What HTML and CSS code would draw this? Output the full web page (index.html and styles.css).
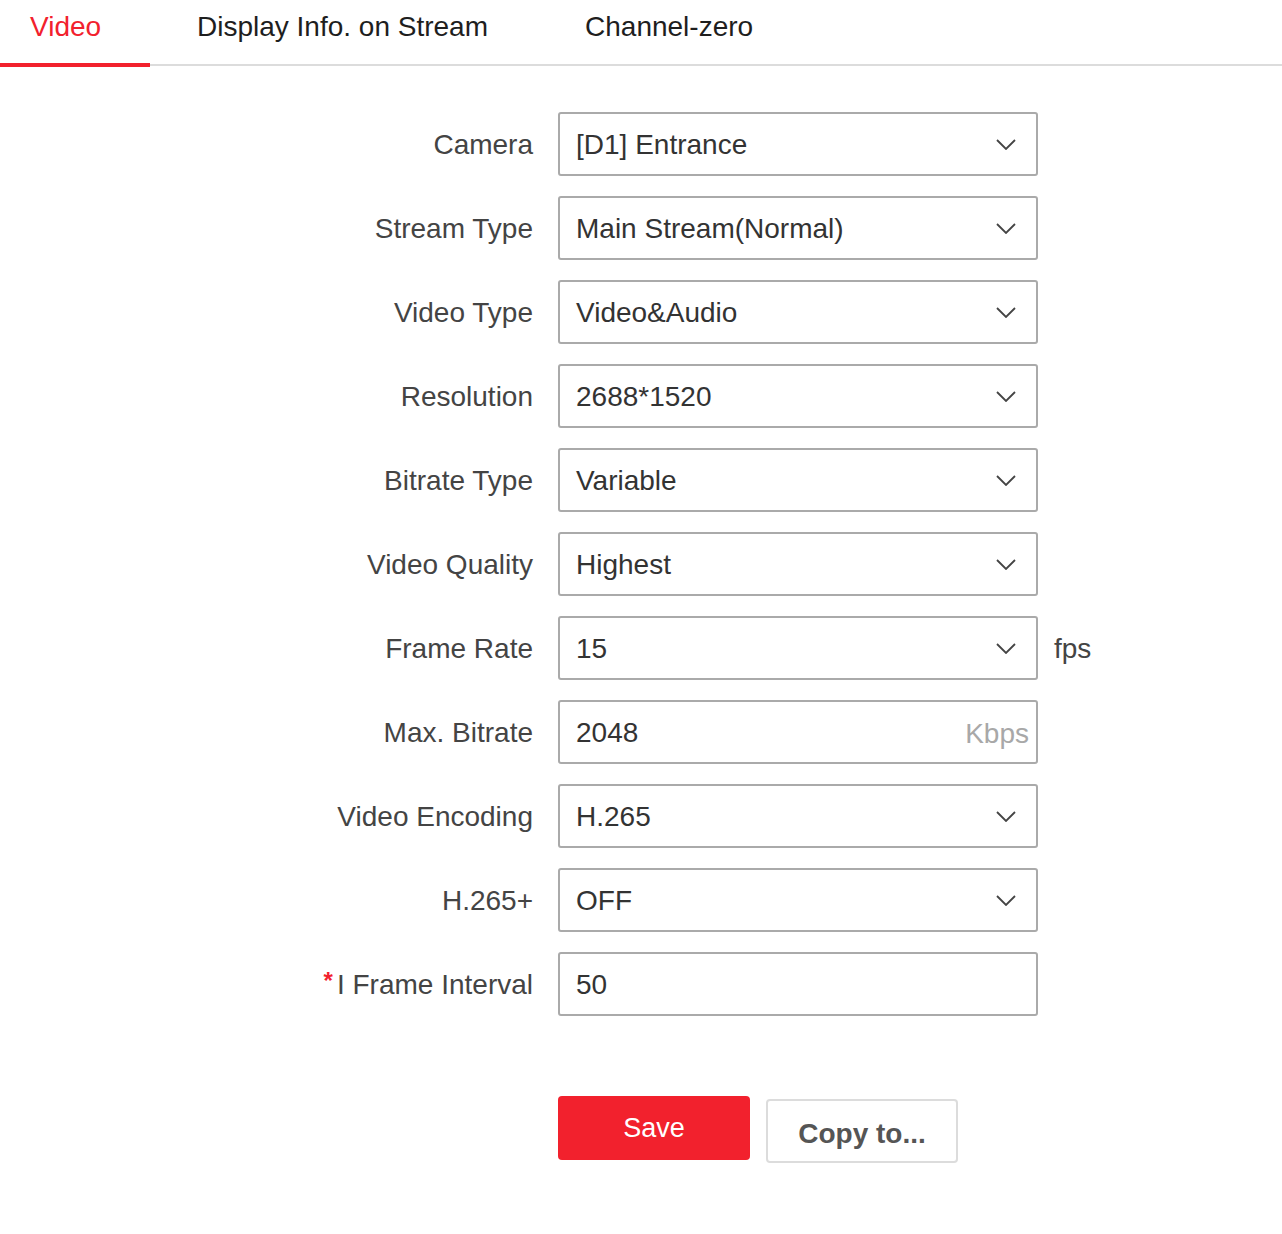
FILE: index.html
```html
<!DOCTYPE html>
<html>
<head>
<meta charset="utf-8">
<link rel="stylesheet" href="styles.css">
</head>
<body>
<div class="tabs">
  <div class="tab active">Video</div>
  <div class="tab t2">Display Info. on Stream</div>
  <div class="tab t3">Channel-zero</div>
</div>
<div class="form">
  <div class="label">Camera</div>
  <div class="field select"><span>[D1] Entrance</span><svg class="chev" viewBox="0 0 20 11" width="20" height="11"><polyline points="1,1 10,10 19,1"/></svg></div>
  <div></div>

  <div class="label">Stream Type</div>
  <div class="field select"><span>Main Stream(Normal)</span><svg class="chev" viewBox="0 0 20 11" width="20" height="11"><polyline points="1,1 10,10 19,1"/></svg></div>
  <div></div>

  <div class="label">Video Type</div>
  <div class="field select"><span>Video&amp;Audio</span><svg class="chev" viewBox="0 0 20 11" width="20" height="11"><polyline points="1,1 10,10 19,1"/></svg></div>
  <div></div>

  <div class="label">Resolution</div>
  <div class="field select"><span>2688*1520</span><svg class="chev" viewBox="0 0 20 11" width="20" height="11"><polyline points="1,1 10,10 19,1"/></svg></div>
  <div></div>

  <div class="label">Bitrate Type</div>
  <div class="field select"><span>Variable</span><svg class="chev" viewBox="0 0 20 11" width="20" height="11"><polyline points="1,1 10,10 19,1"/></svg></div>
  <div></div>

  <div class="label">Video Quality</div>
  <div class="field select"><span>Highest</span><svg class="chev" viewBox="0 0 20 11" width="20" height="11"><polyline points="1,1 10,10 19,1"/></svg></div>
  <div></div>

  <div class="label">Frame Rate</div>
  <div class="field select"><span>15</span><svg class="chev" viewBox="0 0 20 11" width="20" height="11"><polyline points="1,1 10,10 19,1"/></svg></div>
  <div class="unit">fps</div>

  <div class="label">Max. Bitrate</div>
  <div class="field input"><span>2048</span><span class="suffix">Kbps</span></div>
  <div></div>

  <div class="label">Video Encoding</div>
  <div class="field select"><span>H.265</span><svg class="chev" viewBox="0 0 20 11" width="20" height="11"><polyline points="1,1 10,10 19,1"/></svg></div>
  <div></div>

  <div class="label">H.265+</div>
  <div class="field select"><span>OFF</span><svg class="chev" viewBox="0 0 20 11" width="20" height="11"><polyline points="1,1 10,10 19,1"/></svg></div>
  <div></div>

  <div class="label"><span class="req">*</span>I Frame Interval</div>
  <div class="field input"><span>50</span></div>
  <div></div>
</div>
<div class="actions">
  <button class="btn save">Save</button>
  <button class="btn copy">Copy to...</button>
</div>
</body>
</html>
```

FILE: styles.css
```css
html, body {
  margin: 0;
  padding: 0;
  background: #fff;
  font-family: "Liberation Sans", Arial, sans-serif;
}
.tabs {
  display: flex;
  height: 64px;
  border-bottom: 2px solid #dcdcdc;
}
.tab {
  position: relative;
  font-size: 28px;
  line-height: 54px;
  color: #1e1e1e;
  white-space: nowrap;
}
.tab.active {
  width: 150px;
  box-sizing: border-box;
  padding-left: 30px;
  color: #f2212d;
}
.tab.active::after {
  content: "";
  position: absolute;
  left: 0;
  right: 0;
  bottom: -3px;
  height: 4px;
  background: #f2212d;
}
.tab.t2 { margin-left: 47px; }
.tab.t3 { margin-left: 97px; }

.form {
  display: grid;
  grid-template-columns: 533px 480px auto;
  column-gap: 25px;
  row-gap: 20px;
  margin-top: 46px;
  align-items: center;
}
.label {
  text-align: right;
  font-size: 28px;
  color: #444;
  white-space: nowrap;
  padding-top: 2px;
}
.req {
  color: #f2212d;
  font-size: 24px;
  font-weight: bold;
  position: relative;
  top: -5px;
  margin-right: 4px;
}
.field {
  height: 64px;
  box-sizing: border-box;
  border: 2px solid #aaaaaa;
  border-radius: 3px;
  display: flex;
  align-items: center;
  justify-content: space-between;
  padding: 2px 20px 0 16px;
  font-size: 28px;
  color: #333;
}
.field.input {
  padding-right: 7px;
}
.chev {
  fill: none;
  stroke: #444;
  stroke-width: 1.8;
  flex: none;
  margin-top: -2px;
}
.suffix {
  color: #a8a8a8;
  margin-top: 2px;
}
.unit {
  font-size: 28px;
  color: #444;
  margin-left: -9px;
  padding-top: 2px;
}
.actions {
  display: flex;
  align-items: flex-start;
  gap: 16px;
  margin-left: 558px;
  margin-top: 80px;
}
.btn {
  width: 192px;
  height: 64px;
  box-sizing: border-box;
  border-radius: 4px;
  font-family: "Liberation Sans", Arial, sans-serif;
  font-size: 28px;
  padding: 0;
  cursor: pointer;
}
.btn.save {
  background: #f2212d;
  color: #fff;
  border: none;
  font-size: 27px;
}
.btn.copy {
  margin-top: 3px;
  padding-top: 5px;
  background: #fff;
  color: #555;
  border: 2px solid #dcdcdc;
  font-weight: bold;
}
```
